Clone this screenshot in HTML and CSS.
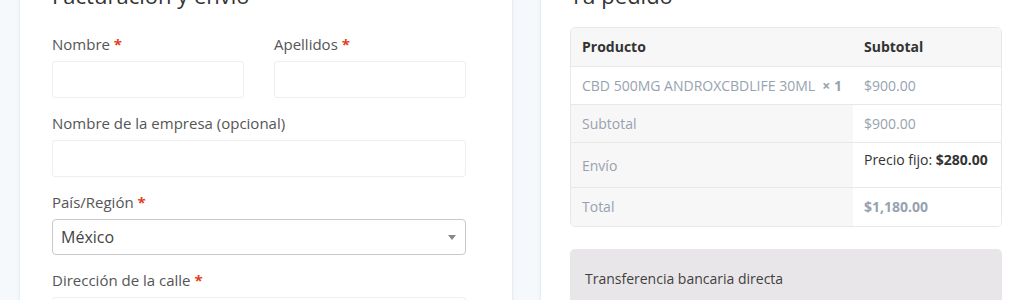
FILE: index.html
```html
<!DOCTYPE html>
<html lang="es">
  <head>
    <meta charset="UTF-8" />
    <title>Finalizar compra</title>
    <meta name="viewport" content="width=device-width, initial-scale=1.0" />
    <link rel="stylesheet" href="styles.css">
  </head>

  <body>
    <main class="checkout">
      <section class="card billing">
        <h3>Facturación y envío</h3>

        <div class="form-row split">
          <div class="field">
            <label>Nombre <abbr>*</abbr></label>
            <input type="text" />
          </div>
          <div class="field">
            <label>Apellidos <abbr>*</abbr></label>
            <input type="text" />
          </div>
        </div>

        <div class="field">
          <label>Nombre de la empresa (opcional)</label>
          <input type="text" />
        </div>

        <div class="field">
          <label>País/Región <abbr>*</abbr></label>
          <div class="select">
            <span>México</span>
            <b class="caret"></b>
          </div>
        </div>

        <div class="field">
          <label>Dirección de la calle <abbr>*</abbr></label>
          <input type="text" />
        </div>
      </section>

      <section class="card order">
        <h3>Tu pedido</h3>

        <table class="order-table">
          <thead>
            <tr>
              <th>Producto</th>
              <th class="col-right">Subtotal</th>
            </tr>
          </thead>
          <tbody>
            <tr class="item">
              <td>CBD 500MG ANDROXCBDLIFE 30ML &nbsp;<strong>× 1</strong></td>
              <td class="col-right">$900.00</td>
            </tr>
          </tbody>
          <tfoot>
            <tr>
              <th>Subtotal</th>
              <td class="col-right">$900.00</td>
            </tr>
            <tr class="shipping">
              <th>Envío</th>
              <td class="col-right">Precio fijo: <strong>$280.00</strong></td>
            </tr>
            <tr class="total">
              <th>Total</th>
              <td class="col-right"><strong>$1,180.00</strong></td>
            </tr>
          </tfoot>
        </table>

        <div class="payment">
          <div class="method">Transferencia bancaria directa</div>
          <div class="payment-box"></div>
        </div>
      </section>
    </main>
  </body>
</html>
```

FILE: styles.css
```css
* {
  box-sizing: border-box;
  margin: 0;
  padding: 0;
}

body {
  font-family: "Open Sans", "Liberation Sans", sans-serif;
  background-color: #f5f9fc;
  color: #444;
  overflow: hidden;
}

.checkout {
  display: flex;
  gap: 29px;
  padding-left: 20px;
  margin-top: -50px;
}

.card {
  background: #fff;
  box-shadow: 0 0 3px rgba(60, 80, 110, 0.18);
  padding-top: 30px;
  flex-shrink: 0;
  width: 492px;
}

.card h3 {
  font-size: 22px;
  font-weight: 400;
  line-height: 30px;
  color: #333;
  margin-bottom: 23px;
}

.billing {
  padding-left: 32px;
  padding-right: 46px;
}

.order {
  padding-left: 29px;
  padding-right: 31px;
}

.order h3 {
  margin-bottom: 17px;
}

.form-row.split {
  display: flex;
  gap: 30px;
}

.form-row.split .field {
  flex: 1;
}

.field {
  display: flex;
  flex-direction: column;
  margin-bottom: 14px;
}

.field label {
  font-size: 15px;
  line-height: 22px;
  color: #555;
  margin-bottom: 6px;
}

.field abbr {
  color: #e2401c;
  font-weight: 700;
  text-decoration: none;
}

.field input {
  height: 37px;
  border: 1px solid #eeeeee;
  border-radius: 3px;
  background: #fff;
}

.select {
  height: 36px;
  border: 1px solid #c9c9c9;
  border-radius: 4px;
  display: flex;
  align-items: center;
  justify-content: space-between;
  padding: 0 9px 0 8px;
  font-size: 16px;
  color: #444;
}

.caret {
  width: 0;
  height: 0;
  border-left: 4px solid transparent;
  border-right: 4px solid transparent;
  border-top: 5px solid #888;
}

/* order table */
.order-table {
  width: 100%;
  border-collapse: separate;
  border-spacing: 0;
  border: 1px solid #e8e8e8;
  border-radius: 5px;
  overflow: hidden;
  font-size: 14px;
  line-height: 20px;
}

.order-table th,
.order-table td {
  text-align: left;
  padding: 9px 11px 8px;
  border-top: 1px solid #e8e8e8;
  white-space: nowrap;
}

.order-table thead th {
  border-top: none;
  background: #f7f7f7;
  color: #333;
  font-weight: 700;
  padding: 9px 11px 9px;
}

.order-table .col-right {
  width: 150px;
}

.order-table td {
  color: #97a2b0;
  background: #fff;
}

.order-table tfoot th {
  background: #f7f7f7;
  color: #97a2b0;
  font-weight: 400;
}

.order-table .shipping th,
.order-table .shipping td {
  height: 45px;
}

.order-table .shipping td {
  vertical-align: top;
  padding-top: 7px;
  color: #333;
}

.order-table .total th,
.order-table .total td {
  padding-bottom: 9px;
}

.order-table strong {
  font-weight: 700;
}

/* payment */
.payment {
  margin-top: 22px;
  background: #e9e6ea;
  border-radius: 5px;
  padding: 20px 15px 0 15px;
}

.method {
  font-size: 14px;
  line-height: 20px;
  color: #3f3f3f;
}

.payment-box {
  position: relative;
  margin-top: 18px;
  height: 40px;
  background: #efedf0;
  border-radius: 3px;
}

.payment-box::before {
  content: "";
  position: absolute;
  top: -6px;
  left: 34px;
  border-left: 7px solid transparent;
  border-right: 7px solid transparent;
  border-bottom: 6px solid #efedf0;
}
```
